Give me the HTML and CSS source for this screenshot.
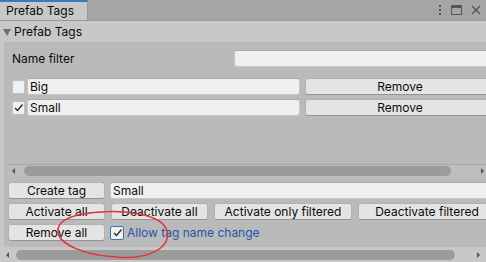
FILE: index.html
```html
<!DOCTYPE html>
<html lang="en">
<head>
  <meta charset="UTF-8" />
  <title>Prefab Tags</title>
  <link rel="stylesheet" href="styles.css">
</head>
<body>
  <div class="window">
    <div class="tabbar">
      <div class="tab">Prefab Tags</div>
      <div class="tab-icons">
        <svg width="4" height="10" viewBox="0 0 4 10"><rect x="1" y="0" width="2" height="2"/><rect x="1" y="4" width="2" height="2"/><rect x="1" y="8" width="2" height="2"/></svg>
        <svg width="11" height="10" viewBox="0 0 11 10"><rect x="0.5" y="0.5" width="10" height="9" fill="none" stroke="#555"/><rect x="0" y="0" width="11" height="3"/></svg>
        <svg width="10" height="10" viewBox="0 0 10 10"><path d="M1 1 L9 9 M9 1 L1 9" stroke="#555" stroke-width="1.4" fill="none"/></svg>
      </div>
    </div>

    <div class="header">
      <svg class="fold" width="8" height="8" viewBox="0 0 8 8"><path d="M0 1 L8 1 L4 8 Z"/></svg>
      <span>Prefab Tags</span>
    </div>

    <div class="content">
      <div class="inner">
        <div class="filter-row">
          <span class="label">Name filter</span>
          <div class="field filter-field"></div>
        </div>

        <div class="list">
          <div class="list-rows">
            <div class="list-row">
              <div class="toggle"></div>
              <div class="field tag-field">Big</div>
              <div class="button remove">Remove</div>
            </div>
            <div class="list-row">
              <div class="toggle">
                <svg width="11" height="11" viewBox="0 0 11 11"><path d="M2 6 L4.5 8.5 L9.5 2.5" stroke="#222" stroke-width="1.2" fill="none"/></svg>
              </div>
              <div class="field tag-field">Small</div>
              <div class="button remove">Remove</div>
            </div>
          </div>
          <div class="hscroll inner-scroll">
            <span class="arrow-left"></span>
            <div class="thumb"></div>
            <span class="arrow-right"></span>
          </div>
        </div>

        <div class="action-row">
          <div class="button w97">Create tag</div>
          <div class="field name-field">Small</div>
        </div>
        <div class="action-row">
          <div class="button w97">Activate all</div>
          <div class="button w97">Deactivate all</div>
          <div class="button w138">Activate only filtered</div>
          <div class="button w138">Deactivate filtered</div>
        </div>
        <div class="action-row">
          <div class="button w97">Remove all</div>
          <div class="toggle focused">
            <svg width="11" height="11" viewBox="0 0 11 11"><path d="M2 6 L4.5 8.5 L9.5 2.5" stroke="#222" stroke-width="1.2" fill="none"/></svg>
          </div>
          <span class="toggle-label">Allow tag name change</span>
        </div>
      </div>
    </div>

    <div class="hscroll outer-scroll">
      <span class="arrow-left"></span>
      <div class="thumb"></div>
      <span class="arrow-right"></span>
    </div>

    <!-- red marker circle drawn over the screenshot -->
    <svg class="annotation" width="486" height="262" viewBox="0 0 486 262">
      <path d="M88 213 C122 209 162 213 167 231 C171 249 146 260 116 257 C84 255 56 244 58 229 C60 218 78 213 104 212" fill="none" stroke="#e2343a" stroke-width="1.6" stroke-linecap="round"/>
    </svg>
  </div>
</body>
</html>
```

FILE: styles.css
```css
body {
  margin: 0;
  overflow: hidden;
  font-family: Inter, "Noto Sans", sans-serif;
  font-size: 12px;
  color: #0b0b0b;
}
.window {
  position: relative;
  width: 486px;
  height: 262px;
  background-color: #c8c8c8;
  display: flex;
  flex-direction: column;
  overflow: hidden;
}
.tabbar {
  height: 21px;
  background-color: #a5a5a5;
  display: flex;
  align-items: flex-end;
  justify-content: space-between;
  border-bottom: 1px solid #999;
  box-sizing: border-box;
}
.tab {
  width: 88px;
  height: 20px;
  box-sizing: border-box;
  background-color: #c8c8c8;
  border-top: 2px solid #3a79bb;
  border-right: 1px solid #999;
  padding: 1px 0 0 6px;
  line-height: 16px;
}
.tab-icons {
  display: flex;
  align-items: center;
  gap: 9px;
  height: 21px;
  padding-right: 5px;
  fill: #555;
}
.header {
  height: 21px;
  display: flex;
  align-items: center;
  gap: 3px;
  padding-left: 3px;
}
.fold {
  fill: #707070;
}
.content {
  height: 205px;
  margin-left: 4px;
  background-color: #bababa;
  overflow: hidden;
}
.inner {
  width: 600px;
  padding: 8px 0 0 4px;
  display: flex;
  flex-direction: column;
}
.filter-row {
  height: 17px;
  display: flex;
  align-items: center;
}
.label {
  width: 222px;
  padding-left: 4px;
}
.field {
  height: 17px;
  box-sizing: border-box;
  background-color: #f0f0f0;
  border: 1px solid #c6c6c6;
  border-top-color: #a9a9a9;
  border-radius: 3px;
  padding-left: 2px;
  line-height: 15px;
}
.filter-field {
  width: 300px;
}
.list {
  margin-top: 5px;
  height: 105px;
  display: flex;
  flex-direction: column;
}
.list-rows {
  flex: 1;
  padding: 6px 0 0 4px;
  display: flex;
  flex-direction: column;
  gap: 4px;
}
.list-row {
  display: flex;
  align-items: center;
  gap: 2px;
}
.toggle {
  width: 13px;
  height: 14px;
  box-sizing: border-box;
  background-color: #f0f0f0;
  border: 1px solid #c0c0c0;
  border-radius: 2px;
  display: flex;
  align-items: center;
  justify-content: center;
}
.tag-field {
  width: 273px;
  margin-right: 3px;
}
.button {
  height: 17px;
  box-sizing: border-box;
  background-color: #e4e4e4;
  border: 1px solid #b2b2b2;
  border-bottom-color: #939393;
  border-radius: 3px;
  text-align: center;
  line-height: 15px;
}
.remove {
  width: 190px;
}
.hscroll {
  height: 13px;
  display: flex;
  align-items: center;
  box-sizing: border-box;
}
.inner-scroll {
  border-top: 1px solid #a8a8a8;
  background-color: #bdbdbd;
  padding-left: 4px;
}
.arrow-left {
  width: 0;
  height: 0;
  border-top: 3px solid transparent;
  border-bottom: 3px solid transparent;
  border-right: 3px solid #555;
  margin-right: 9px;
}
.arrow-right {
  width: 0;
  height: 0;
  border-top: 3px solid transparent;
  border-bottom: 3px solid transparent;
  border-left: 3px solid #555;
  margin-left: 30px;
}
.thumb {
  height: 10px;
  width: 427px;
  background-color: #9b9b9b;
  border-radius: 5px;
}
.action-row {
  margin-top: 4px;
  display: flex;
  align-items: center;
  gap: 6px;
}
.list + .action-row {
  margin-top: 5px;
}
.w97 {
  width: 97px;
}
.w138 {
  width: 138px;
}
.name-field {
  width: 400px;
  margin-left: -1px;
}
.toggle.focused {
  width: 14px;
  border-color: #3a72b8;
  margin-left: -1px;
}
.toggle-label {
  color: #1b57a8;
  margin-left: -3px;
}
.outer-scroll {
  height: 15px;
  padding-left: 6px;
}
.outer-scroll .arrow-left {
  margin-right: 7px;
}
.outer-scroll .thumb {
  width: 439px;
}
.outer-scroll .arrow-right {
  margin-left: 22px;
}
.annotation {
  position: absolute;
  left: 0;
  top: 0;
  pointer-events: none;
}
```
